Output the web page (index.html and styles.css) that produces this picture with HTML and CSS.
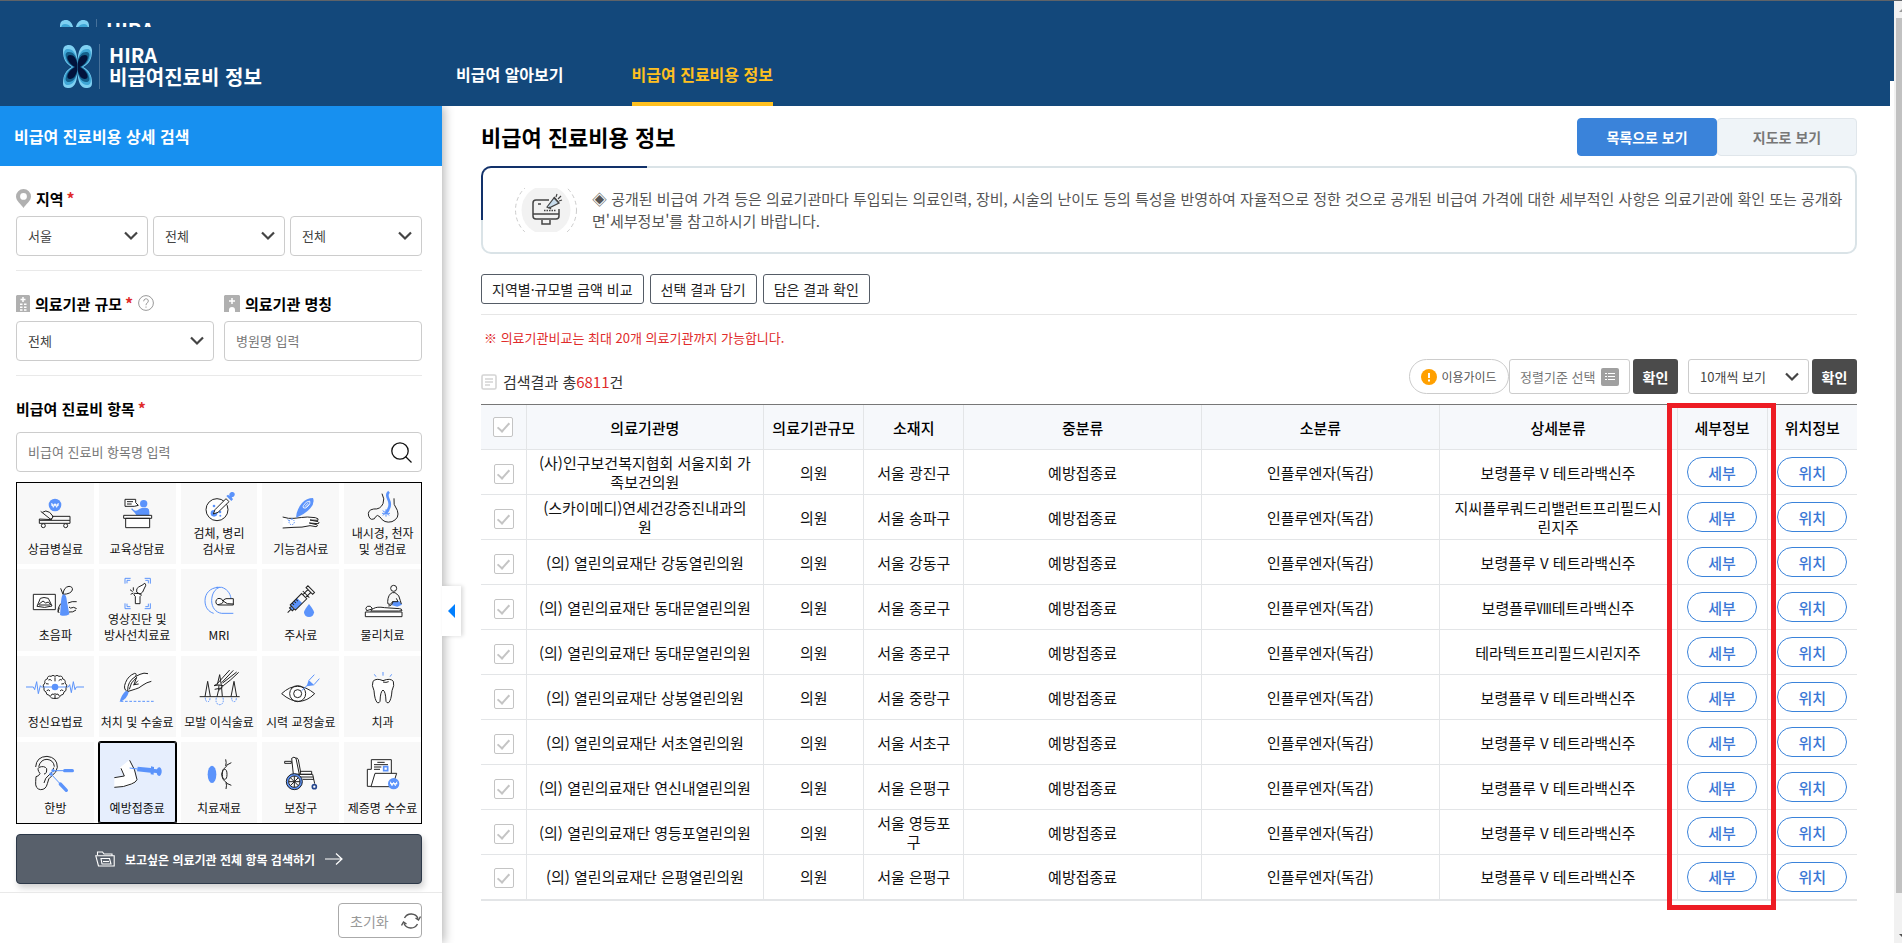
FILE: index.html
```html
<!DOCTYPE html>
<html lang="ko">
<head>
<meta charset="utf-8">
<title>HIRA 비급여진료비 정보</title>
<link rel="stylesheet" href="styles.css">
</head>
<body>
<svg class="defs" width="0" height="0" aria-hidden="true">
  <symbol id="hira" viewBox="0 0 29 44">
    <g id="wings">
      <path fill="#7fd0f2" d="M6 0C2 0 0 2 0 6c0 8 3 13 9 16C3 25 0 30 0 38c0 4 2 5 6 5 5 0 8-5 8.500-16V17C14 5 11 0 6 0z"/>
      <path fill="#3fa6d6" d="M5 4C2 4 1 6 1 9c0 6 4 10 9 13-5 3-9 7-9 12 0 4 1 6 4 6 5 0 8-5 9.500-13V17C13 8 10 4 5 4z"/>
      <path fill="#14608c" d="M6 7C3 7 2 9 3 12c1 5 4 8 8 10-4 2-7 5-8 10-1 3 0 5 3 5 4 0 7-4 8.500-10V17C13 10 10 7 6 7z"/>
      <path fill="#02133c" d="M7 10c-3 0-3 3-2 5 2 4 4 5 7 7-3 2-5 3-7 7-1 2-1 5 2 5 4 0 6-4 7.500-9v-6C13 13 11 10 7 10z"/>
    </g>
    <use href="#wings" transform="matrix(-1 0 0 1 29 0)"/>
  </symbol>
  <symbol id="chev" viewBox="0 0 14 10"><path d="M1 1.500l6 6 6-6" fill="none" stroke="#444" stroke-width="2.200"/></symbol>
</svg>

<div class="page">
<div class="app">
  <header class="top">
    <div class="brand">
      <div class="brand-peek" aria-hidden="true">
        <div class="logo"><svg class="mark"><use href="#hira"/></svg><span class="logo-text">HIRA</span></div>
      </div>
      <a class="logo" href="#"><svg class="mark"><use href="#hira"/></svg><span class="logo-text">HIRA<br>비급여진료비 정보</span></a>
    </div>
    <nav class="menu">
      <a href="#">비급여 알아보기</a>
      <a href="#" class="on">비급여 진료비용 정보</a>
    </nav>
  </header>

  <div class="body">
    <aside class="side">
      <h2 class="side-title">비급여 진료비용 상세 검색</h2>
      <button class="fold" aria-label="접기"><svg width="8" height="14" viewBox="0 0 8 14"><path d="M0 7l7-7v14z" fill="#007fff"/></svg></button>

      <section class="block">
        <label class="name" for="sido"><svg width="15" height="19" viewBox="0 0 15 19"><path fill="#b0b0b0" fill-rule="evenodd" d="M7.500 0a7.500 7.500 0 0 1 7.500 7.500C15 12 10 15 7.500 19 5 15 0 12 0 7.500A7.500 7.500 0 0 1 7.500 0zm0 4a3.400 3.400 0 1 0 0 6.800 3.400 3.400 0 0 0 0-6.800z"/></svg>지역<i>*</i></label>
        <div class="row three">
          <span class="pick"><select id="sido"><option>서울</option></select><svg><use href="#chev"/></svg></span>
          <span class="pick"><select aria-label="시군구"><option>전체</option></select><svg><use href="#chev"/></svg></span>
          <span class="pick"><select aria-label="읍면동"><option>전체</option></select><svg><use href="#chev"/></svg></span>
        </div>
      </section>

      <section class="block">
        <div class="row two">
          <div>
            <label class="name" for="size"><svg width="14" height="17" viewBox="0 0 14 17"><path fill="#b0b0b0" d="M1 0h12l1 1v16H0V1z"/><path stroke="#fff" stroke-width="1.500" d="M7 2v5M4.500 4.500h5M4 9.200h2.500M8 9.200h2.500M4 12.200h2.500M8 12.200h2.500M4 15h2.500M8 15h2.500"/></svg>의료기관 규모<i>*</i><svg width="16" height="16" viewBox="0 0 16 16" fill="none" stroke="#999"><circle cx="8" cy="8" r="7.400"/><path d="M5.700 6.300c0-3.400 4.800-3.200 4.600-.2C10.200 7.900 8 8 8 10.200M8 11.500v1.200"/></svg></label>
            <span class="pick"><select id="size"><option>전체</option></select><svg><use href="#chev"/></svg></span>
          </div>
          <div>
            <label class="name" for="hosp"><svg width="16" height="17" viewBox="0 0 16 17"><path fill="#b0b0b0" d="M1 0h14l1 1v16h-5v-2a3 3 0 0 0-6 0v2H0V1z"/><path stroke="#fff" stroke-width="1.500" d="M8 3v6M5 6h6"/></svg>의료기관 명칭</label>
            <input class="field" id="hosp" type="text" placeholder="병원명 입력">
          </div>
        </div>
      </section>

      <section class="items">
        <label class="name" for="item">비급여 진료비 항목<i>*</i></label>
        <div class="find">
          <input class="field" id="item" type="text" placeholder="비급여 진료비 항목명 입력">
          <button aria-label="검색"><svg width="21" height="21" viewBox="0 0 21 21" fill="none" stroke="#111" stroke-width="1.300"><circle cx="9" cy="9" r="8.200"/><path d="M14.500 14.500l6 6"/></svg></button>
        </div>

        <div class="grid">
          <button class="cell"><svg class="ico" viewBox="51 24 228 174"><circle class="f" cx="165" cy="90" r="19"/><path stroke="#fff" fill="none" d="M155 84l5 13 5-11 5 11 5-13M153 90h24"/><path class="k" d="M118 136h92v9h-92zM210 136v-12h-54M118 136v-4l38 2M122 109l30 24M127 112q10-8 22 0l10 12q0 8-8 8"/><circle class="k w" cx="130" cy="152" r="6"/><circle class="k w" cx="197" cy="152" r="6"/></svg><span>상급병실료</span></button>
          <button class="cell"><svg class="ico" viewBox="295 24 228 174"><path class="k w" d="M373 73h32v10l8 8-12 3h-28zM379 80h18M379 87h14"/><circle class="f" cx="429" cy="86" r="11"/><path class="f" d="M391 102q4-4 8 3 8 5 17-3 6-4 18-4 12 0 12 12v12h-38q-4-8-17-20z"/><path class="k w" d="M369 121h84v9h-84zM375 130h72v28h-72z"/></svg><span>교육상담료</span></button>
          <button class="cell"><svg class="ico two-line" viewBox="541 24 228 126"><circle class="k w" cx="649" cy="104" r="33"/><circle class="f" cx="640" cy="115" r="10"/><circle class="f" cx="640" cy="93" r="4"/><circle class="f" cx="658" cy="111" r="4"/><circle class="f" cx="659" cy="122" r="3"/><path class="k w" d="M638 117l5-13 33-33 9 9-33 32z"/><path class="f" d="M677 63l5-4 5 4c-4-8 5-14 11-11 8 4 4 15-5 15l4 6-5 5z"/></svg><span>검체, 병리<br>검사료</span></button>
          <button class="cell"><svg class="ico" viewBox="131 24 228 174"><path class="k w" d="M190 126q18 6 34 4 24-3 40-4l24 2q12 3 8 8l-24-1 24 5q7 4 0 6l-26-2 22 5q6 4-2 6l-18-3q-24 6-48 5l-34 2"/><circle class="b" cx="217" cy="141" r="8" stroke-dasharray="4 3"/><path class="b" d="M205 134l6 4M218 129v4"/><path class="f" d="M230 128q2-26 18-44 14-15 33-15 6 15-8 31-16 18-43 28z"/><path stroke="#fff" fill="none" stroke-width="2.500" d="M252 92q8-14 19-14 4 6-5 15-8 9-13 6-3-3-1-7zM256 95l11-11M260 98l10-10"/></svg><span>기능검사료</span></button>
          <button class="cell"><svg class="ico two-line" viewBox="375 24 228 126"><path class="k" d="M486 56q9 16 3 30-8 18-28 16-20 3-15 21 3 9 9 10 10 1 12-8 5-8 13 1 12 20 36 14 24-10 16-34-14-18-10-36"/><path d="M507 50q-9 8-2 22 8 16 1 29l-7 12" fill="none" stroke="#5b93fb" stroke-width="8"/><path class="b" d="M488 107l20 14M508 107l-20 14M498 103v22M486 115h24"/></svg><span>내시경, 천자<br>및 생검료</span></button>

          <button class="cell"><svg class="ico" viewBox="51 282 228 174"><path class="k w" d="M100 358h66v46h-66zM121 370q10-5 24 0l11 23q-22 8-45 1zM115 389l14-11 8 6 8-3 8 9M117 390h33"/><path class="k" d="M182 340l7 18q2-22 18-24 12 1 10 11-4 12-28 13"/><path class="f" d="M191 358q8 0 10 22l7 38q-14 8-28 2l3-40q2-22 8-22z"/><path class="k" d="M204 384q12-6 26-4M207 396q2 6 14 1l9 4M207 411q12 2 21-6M182 386q-14 22-4 28M178 398l-4 14"/></svg><span>초음파</span></button>
          <button class="cell"><svg class="ico two-line" viewBox="295 282 228 126"><path class="b" d="M373 326v-16h17M432 310h17v16M373 385v16h17M432 401h17v-16M379 325v-9h10M434 316h9v9M379 386v9h10M434 395h9v-9"/><path class="k w" d="M404 386v-22q-7-4-3-9l19 1q4 6-2 9v21zM408 351q-2-12 6-15l13-7q8-9 8 3l-5 10q-2 10-12 16zM398 337v10M388 344l8 6M390 358l8-4"/></svg><span>영상진단 및<br>방사선치료료</span></button>
          <button class="cell"><svg class="ico" viewBox="541 282 228 174"><path class="b" d="M652 337c-24 2-39 18-39 40 0 20 10 33 26 38M657 337c-14 4-24 20-24 40s12 36 30 38h35M647 337h16c14 4 26 16 28 34"/><path class="k w" d="M698 371h-22q-8 2-9 8-2-9-12-9-11 2-9 14 2 6 8 6h44zM652 389q14-1 17-10l11 7 18 1"/></svg><span>MRI</span></button>
          <button class="cell"><svg class="ico" viewBox="131 282 228 174"><g transform="translate(205 413) rotate(-45)"><path class="k" d="M0 0h16"/><path class="f" d="M14-6h8v12h-8zM24-11h27v22H24z"/><path class="k" d="M22-11h48v22H22zM14-6h8v12h-8zM70-6h22v12H70zM92-14h8v28h-8zM78-14v28M30-11v8M38-11v8M46-11v8"/></g><path class="f" d="M269 387q15 19 15 25a15 14 0 0 1-30 0q0-6 15-25z"/></svg><span>주사료</span></button>
          <button class="cell"><svg class="ico" viewBox="375 282 228 174"><path class="k w" d="M436 411h110v14H436zM440 407q-6-8 2-13 10-3 14 5 2 6-4 9h84l10-1q0-6-8-6l-44-3q-24-4-34 3z"/><path class="f" d="M518 379h20l8 10-14 6-16-4z"/><path class="k" d="M505 393q12 0 14-14l-8 9q-10 2-8-8 1-22 14-27h8q14 6 16 24l3 10M518 380h16l-5-10"/><circle class="k w" cx="521" cy="340" r="9"/></svg><span>물리치료</span></button>

          <button class="cell"><svg class="ico" viewBox="51 18 228 174"><path class="b" d="M78 111h22l4 8 6-24 5 36 6-24 3 4h81l4-7 5 24 6-33 5 24 4-8h23"/><path class="k w" d="M165 79q-6-6-12 0-11-3-11 8-10 2-7 12-9 6-3 14-3 10 6 13 0 9 10 10 5 11 17 9 12 2 17-9 10-1 10-10 9-3 6-13 6-8-3-14 3-10-7-12 0-11-11-8-6-6-12 0z"/><path class="k" d="M145 90q6-4 10 2M176 92q4-6 10-2M138 101l8 1M184 102l8-1M140 122q6-5 10 1M180 123q4-6 10-1M152 138q3-9 10-5M168 133q7-4 10 5M165 82v12M165 129v18"/><path class="b" d="M132 111h66"/><circle class="f" cx="165" cy="111" r="10"/></svg><span>정신요법료</span></button>
          <button class="cell"><svg class="ico" viewBox="295 18 228 174"><path class="k w" d="M452 94q-14 3-25 11-14 11-22 12l-25 8q-14-8-5-28 8-20 27-27 8 0 2 10l14-7q12-6 24-2"/><path class="k" d="M404 80q-24 14-23 43M386 118q2-20 22-36l-9 24M412 92l-12 12 14-2"/><path class="f" d="M376 122l8 4q-4 22-27 30 5-22 19-34z"/><path class="b" d="M360 154h102" stroke-dasharray="8 5"/></svg><span>처치 및 수술료</span></button>
          <button class="cell"><svg class="ico" viewBox="541 18 228 174"><path class="k" d="M597 140h120M613 140l8-46 8 46M649 140q6-20 6-36M665 140q-1-28-8-66l-7 30M691 140l9-46 8 46M687 60q-20 22-38 42l-9 5 14-2 14 2q22-16 46-40M698 61l-35 37M708 66l-42 33M642 118l20-4M668 108l-14 14"/><path class="b" stroke-dasharray="5 3" d="M614 143q0 12 7 12t7-12M647 143q-4 20 10 21 14-1 10-21M693 143q0 12 7 12t7-12"/></svg><span>모발 이식술료</span></button>
          <button class="cell"><svg class="ico" viewBox="131 18 228 174"><path class="k w" d="M187 131q46-44 99 0-46 46-99 0z"/><circle class="k" cx="235" cy="131" r="24"/><circle class="k" cx="235" cy="131" r="12"/><path class="b" d="M247 122l18-17M269 91l16-17M284 104l16-18"/><path class="f" d="M268 90l17 16-23 3z"/></svg><span>시력 교정술료</span></button>
          <button class="cell"><svg class="ico" viewBox="375 18 228 174"><path class="b" d="M463 73l5 7M489 66v11M515 73l-5 7"/><path class="k w" d="M489 96q9 3 17-1M489 92q-20-9-30 2-5 12 3 28 2 28 10 36 6 2 8-4 1-30 9-34 8 4 9 34 2 6 8 4 8-8 10-36 8-16 4-28-9-11-31-2z"/></svg><span>치과</span></button>

          <button class="cell"><svg class="ico" viewBox="51 279 228 174"><path class="k" d="M107 354q2-31 34-32 31 3 31 33-2 16-16 25-12 7-14 24-4 18-20 18-17-2-15-24l1-15q8-1 12-9-10-14-3-19 16-6 23 4 1 16-8 16M116 353q6-22 25-22 20 2 22 22M161 356q-1 15-14 22-12 8-15 24"/><circle class="f" cx="159" cy="365" r="5"/><circle class="f" cx="153" cy="375" r="5"/><path class="b" d="M160 365h30M153 375l28 30"/><path stroke="#5b93fb" stroke-width="10" stroke-linecap="round" d="M194 365h23M181 405l18 19"/></svg><span>한방</span></button>
          <button class="cell sel" aria-pressed="true"><svg class="ico" viewBox="295 279 228 174"><path fill="#fff" d="M341 386l29-5-13-25 28-22q20 30 22 64-20 18-66 17z"/><path class="k" d="M341 386l30-5-10-23M387 334q18 28 22 58-3 8-17 13-22 10-51 10"/><path class="b" d="M387 357l24 3"/><path class="f" d="M411 353l40 4v-5l9 2v6l9 1q2-7 8-6 7 4 6 15-2 11-8 11-6-1-7-9l-9-1v6l-9-1v-5l-41-4z"/></svg><span>예방접종료</span></button>
          <button class="cell"><svg class="ico" viewBox="541 279 228 174"><ellipse class="f" cx="634" cy="376" rx="13" ry="26"/><path class="k" d="M675 331q3 10 0 20M677 349l15-8M678 403l14 6M676 401q3 6 0 19M679 350q-16 12-16 25 1 18 16 27"/><ellipse class="k" cx="672" cy="376" rx="7" ry="15"/></svg><span>치료재료</span></button>
          <button class="cell"><svg class="ico" viewBox="131 279 228 174"><path class="k w" d="M217 328q7-7 13 0l10 48h-18zM229 327q6-1 8 5l7 38M196 337h20v6h-20zM243 367h34v9h-34zM234 376h46l6 28M238 384h44M250 391h34"/><circle cx="225" cy="398" r="21" fill="#f8f8f8" stroke="#5b93fb" stroke-width="7"/><circle class="k" cx="225" cy="398" r="24"/><circle class="k" cx="225" cy="398" r="17"/><path class="k" d="M225 381v34M208 398h34M213 386l24 24M237 386l-24 24"/><circle cx="285" cy="413" r="6" fill="#fff" stroke="#26478e" stroke-width="5"/></svg><span>보장구</span></button>
          <button class="cell"><svg class="ico" viewBox="375 279 228 174"><path class="k w" d="M453 412h-11v-51h12v-29h60v56"/><path class="k" d="M472 340h22M462 347h42M462 354h22M462 361h18"/><path class="k w" d="M453 413l12-40h65l-13 40z"/><path d="M491 353h12v12h-12z" fill="#fff" stroke="#5b93fb" stroke-width="5"/><circle class="f" cx="521" cy="404" r="17"/><path stroke="#fff" fill="none" d="M511 398l5 12 5-10 5 10 5-12M510 404h22"/></svg><span>제증명 수수료</span></button>
        </div>

        <button class="all"><svg width="20" height="16" viewBox="0 0 20 16" fill="none" stroke="#fff" stroke-width="1.100"><path d="M2.500 4V1h5l1.500 2h8v1.500M3.500 15L.8 4.800h18.400V15zM6 7.500h8.500l1.500 5.500H7z"/><path d="M8 10.500h6"/></svg><span>보고싶은 의료기관 전체 항목 검색하기</span><svg width="18" height="12" viewBox="0 0 18 12" fill="none" stroke="#fff" stroke-width="1.200"><path d="M0 6h17M11 .5L17 6l-6 5.500"/></svg></button>
      </section>

      <div class="foot">
        <button class="reset">초기화<svg width="20" height="18" viewBox="0 0 20 18" fill="none" stroke="#555" stroke-width="1.400"><path d="M3.500 6A7.500 7.500 0 0 1 17 6.500M16.500 12A7.500 7.500 0 0 1 3 11.500M19.500 4.500L17.500 8 14.500 6M.5 13.500L2.500 10 5.500 12"/></svg></button>
      </div>
    </aside>

    <main class="main">
      <div class="head">
        <h1>비급여 진료비용 정보</h1>
        <div class="tabs"><button class="on">목록으로 보기</button><button>지도로 보기</button></div>
      </div>

      <div class="notice">
        <svg width="64" height="44" viewBox="0 0 64 44" fill="none" stroke="#444" stroke-width="1.500"><circle cx="32" cy="22" r="30.500" stroke="#ccc" stroke-width="1" stroke-dasharray="4 3"/><circle cx="32" cy="22" r="24.500" fill="#f2f2f2" stroke="none"/><path d="M35 12H22q-3 0-3 3v13q0 3 3 3h20q3 0 3-3v-7M19 26h26M28 32v4h8v-4M24 16h3"/><path d="M30 22.500h12" stroke-dasharray="1.500 1"/><path d="M33 19l7-9 5 5-10 5z" fill="#c8dcec" stroke-width="1.200"/><path d="M35 19l2 2M40 9l5 6M42 9l1-3M44 11l3-3M45 13l3-1" stroke-width="1.200"/></svg>
        <p>◈ 공개된 비급여 가격 등은 의료기관마다 투입되는 의료인력, 장비, 시술의 난이도 등의 특성을 반영하여 자율적으로 정한 것으로 공개된 비급여 가격에 대한 세부적인 사항은 의료기관에 확인 또는 공개화면'세부정보'를 참고하시기 바랍니다.</p>
      </div>

      <div class="acts"><button>지역별·규모별 금액 비교</button><button>선택 결과 담기</button><button>담은 결과 확인</button></div>
      <p class="warn">※ 의료기관비교는 최대 20개 의료기관까지 가능합니다.</p>

      <div class="bar">
        <p class="count"><svg width="16" height="16" viewBox="0 0 16 16" fill="none" stroke="#d4d4d4" stroke-width="1.600"><rect x="1" y="1" width="14" height="14" rx="1.500"/><path d="M4 5h8M4 8h8M4 11h5"/></svg><span>검색결과 총<b>6811</b>건</span></p>
        <div class="tools">
          <button class="guide"><svg width="16" height="16" viewBox="0 0 16 16"><circle cx="8" cy="8" r="8" fill="#ffa000"/><path d="M8 4v5M8 10.500v2" stroke="#fff" stroke-width="2"/></svg>이용가이드</button>
          <button class="sort">정렬기준 선택<svg width="18" height="18" viewBox="0 0 18 18"><rect width="18" height="18" rx="2" fill="#a0a0a0"/><path d="M4 5.500h2M7 5.500h7M4 8.500h2M7 8.500h7M4 11.500h2M7 11.500h7" stroke="#fff"/></svg></button>
          <button class="ok">확인</button>
          <span class="pick per"><select aria-label="페이지당 개수"><option>10개씩 보기</option></select><svg><use href="#chev"/></svg></span>
          <button class="ok">확인</button>
        </div>
      </div>

      <div class="result">
        <table>
          <colgroup><col class="c-check"><col class="c-wide"><col class="c-mid"><col class="c-mid"><col class="c-wide"><col class="c-wide"><col class="c-wide"><col class="c-btn"><col class="c-btn"></colgroup>
          <thead><tr><th><input type="checkbox" aria-label="전체 선택"></th><th>의료기관명</th><th>의료기관규모</th><th>소재지</th><th>중분류</th><th>소분류</th><th>상세분류</th><th>세부정보</th><th>위치정보</th></tr></thead>
          <tbody>
            <tr><td><input type="checkbox" aria-label="선택"></td><td>(사)인구보건복지협회 서울지회 가족보건의원</td><td>의원</td><td>서울 광진구</td><td>예방접종료</td><td>인플루엔자(독감)</td><td>보령플루 V 테트라백신주</td><td><button>세부</button></td><td><button>위치</button></td></tr>
            <tr><td><input type="checkbox" aria-label="선택"></td><td>(스카이메디)연세건강증진내과의원</td><td>의원</td><td>서울 송파구</td><td>예방접종료</td><td>인플루엔자(독감)</td><td>지씨플루쿼드리밸런트프리필드시린지주</td><td><button>세부</button></td><td><button>위치</button></td></tr>
            <tr><td><input type="checkbox" aria-label="선택"></td><td>(의) 열린의료재단 강동열린의원</td><td>의원</td><td>서울 강동구</td><td>예방접종료</td><td>인플루엔자(독감)</td><td>보령플루 V 테트라백신주</td><td><button>세부</button></td><td><button>위치</button></td></tr>
            <tr><td><input type="checkbox" aria-label="선택"></td><td>(의) 열린의료재단 동대문열린의원</td><td>의원</td><td>서울 종로구</td><td>예방접종료</td><td>인플루엔자(독감)</td><td>보령플루Ⅷ테트라백신주</td><td><button>세부</button></td><td><button>위치</button></td></tr>
            <tr><td><input type="checkbox" aria-label="선택"></td><td>(의) 열린의료재단 동대문열린의원</td><td>의원</td><td>서울 종로구</td><td>예방접종료</td><td>인플루엔자(독감)</td><td>테라텍트프리필드시린지주</td><td><button>세부</button></td><td><button>위치</button></td></tr>
            <tr><td><input type="checkbox" aria-label="선택"></td><td>(의) 열린의료재단 상봉열린의원</td><td>의원</td><td>서울 중랑구</td><td>예방접종료</td><td>인플루엔자(독감)</td><td>보령플루 V 테트라백신주</td><td><button>세부</button></td><td><button>위치</button></td></tr>
            <tr><td><input type="checkbox" aria-label="선택"></td><td>(의) 열린의료재단 서초열린의원</td><td>의원</td><td>서울 서초구</td><td>예방접종료</td><td>인플루엔자(독감)</td><td>보령플루 V 테트라백신주</td><td><button>세부</button></td><td><button>위치</button></td></tr>
            <tr><td><input type="checkbox" aria-label="선택"></td><td>(의) 열린의료재단 연신내열린의원</td><td>의원</td><td>서울 은평구</td><td>예방접종료</td><td>인플루엔자(독감)</td><td>보령플루 V 테트라백신주</td><td><button>세부</button></td><td><button>위치</button></td></tr>
            <tr><td><input type="checkbox" aria-label="선택"></td><td>(의) 열린의료재단 영등포열린의원</td><td>의원</td><td>서울 영등포구</td><td>예방접종료</td><td>인플루엔자(독감)</td><td>보령플루 V 테트라백신주</td><td><button>세부</button></td><td><button>위치</button></td></tr>
            <tr><td><input type="checkbox" aria-label="선택"></td><td>(의) 열린의료재단 은평열린의원</td><td>의원</td><td>서울 은평구</td><td>예방접종료</td><td>인플루엔자(독감)</td><td>보령플루 V 테트라백신주</td><td><button>세부</button></td><td><button>위치</button></td></tr>
          </tbody>
        </table>
        <div class="marker"></div>
      </div>
    </main>
  </div>
</div>
<div class="scroll" aria-hidden="true">
  <svg width="8" height="17" viewBox="0 0 8 17"><path d="M5 11l4-4v4z" fill="#999"/></svg>
  <div class="thumb"></div>
  <svg width="8" height="17" viewBox="0 0 8 17"><path d="M5 8h4v4z" fill="#505050"/></svg>
</div>
</div>
</body>
</html>
```
FILE: styles.css
```css
* { box-sizing: border-box; margin: 0; padding: 0; }
body, button, input, select {
  font-family: "Noto Sans CJK KR", "Noto Sans", sans-serif;
}
body { background: #fff; color: #111; font-size: 15px; }
button { background: none; border: 0; cursor: pointer; }
a { color: inherit; text-decoration: none; }
i, b { font-style: normal; font-weight: 400; color: #e02b2b; }
.defs { position: absolute; }

.page { display: flex; min-height: 100vh; border-top: 1px solid #5f6368; }
.app { flex: 1; min-width: 0; display: flex; flex-direction: column; }

/* window scrollbar */
.scroll { width: 8px; background: #f1f1f1; display: flex; flex-direction: column; }
.scroll svg { flex: none; }
.thumb { flex: 1; margin: 0 0 33px 2px; background: #c1c1c1; }

/* header */
.top {
  height: 105px; display: flex; flex: none;
  background:
    linear-gradient(#13487b, #13487b) 0 0 / 100% 80px no-repeat,
    linear-gradient(#13487b, #13487b) 0 0 / calc(100% - 4px) 100% no-repeat;
  color: #fff;
}
.brand { width: 456px; padding: 18px 0 0 60px; }
.brand-peek { height: 8px; overflow: hidden; }
.brand > .logo { margin: 17px 0 0 3px; }
.logo { display: flex; align-items: center; height: 45px; }
.mark { width: 29px; height: 44px; }
.logo-text {
  margin-left: 7px; padding-left: 9px; height: 45px;
  border-left: 1px solid #47719a;
  font-size: 20px; line-height: 22px; font-weight: 700;
}
.menu { display: flex; gap: 68px; }
.menu a { font-size: 16px; font-weight: 700; line-height: 26px; padding-top: 60px; }
.menu .on { color: #ffc01f; border-bottom: 4px solid #ffc01f; }

.body { flex: 1; display: flex; align-items: stretch; }

/* sidebar */
.side { width: 442px; flex: none; position: relative; background: #fff; box-shadow: 2px 0 10px rgba(0, 0, 0, .3); clip-path: inset(0 -30px 0 0); padding-bottom: 5px; }
.side-title { height: 60px; line-height: 60px; padding-left: 14px; background: #1790f0; color: #fff; font-size: 16px; }
.fold {
  position: absolute; left: 100%; top: 480px; width: 19px; height: 50px;
  background: #fff; box-shadow: 2px 0 4px rgba(0, 0, 0, .15);
  display: flex; align-items: center; justify-content: center;
}
.block { margin: 0 20px 0 16px; padding: 20px 0 14px; border-bottom: 1px solid #e9e9e9; }
.name { display: flex; align-items: center; gap: 5px; height: 24px; margin-bottom: 6px; font-size: 15px; font-weight: 700; color: #000; }
.name i { font-size: 16px; font-weight: 700; margin-left: -2px; }
.row { display: grid; }
.three { grid-template-columns: repeat(3, 1fr); gap: 5px; }
.two { grid-template-columns: repeat(2, 1fr); gap: 10px; }
.pick { display: grid; align-items: center; }
.pick > * { grid-area: 1 / 1; }
.pick svg { width: 14px; height: 10px; justify-self: end; margin-right: 10px; pointer-events: none; }
select, .field {
  width: 100%; height: 40px; padding: 0 11px 1px; appearance: none;
  border: 1px solid #ccc; border-radius: 4px; background: #fff;
  font-size: 13px; color: #444;
}
.field::placeholder { color: #777; }

.items { margin: 20px 20px 8px 16px; }
.items .name { margin-bottom: 12px; }
.find { display: grid; align-items: center; }
.find > * { grid-area: 1 / 1; }
.find button { justify-self: end; width: 21px; height: 21px; margin-right: 10px; }
.find svg { display: block; }

.grid { margin-top: 10px; border: 1px solid #000; display: grid; grid-template-columns: repeat(5, 1fr); grid-template-rows: repeat(4, 1fr); gap: 5px; height: 342px; }
.cell { display: flex; flex-direction: column; align-items: center; background: #f8f8f8; font-size: 12px; line-height: 16px; color: #111; white-space: nowrap; }
.cell.sel { background: #e6eefd; box-shadow: 0 0 0 1px #000, inset 0 0 0 1px #000; border-radius: 2px; }
.ico { width: 76px; height: 58px; flex: none; fill: none; stroke-width: 3; }
.ico.two-line { height: 42px; }
.k { stroke: #222; }
.w { fill: #fff; }
.b { stroke: #5b93fb; }
.f { fill: #5b93fb; }

.all {
  width: 100%; height: 50px; margin-top: 10px;
  display: flex; align-items: center; justify-content: center; gap: 10px;
  background: #58606b; border: 1px solid #2c3848; border-radius: 4px;
  box-shadow: 2px 4px 6px rgba(0, 0, 0, .18);
  color: #fff; font-size: 12px; font-weight: 700;
}
.foot { border-top: 1px solid #e9e9e9; padding: 10px 20px 0 0; display: flex; justify-content: flex-end; }
.reset {
  height: 35px; width: 84px; padding-left: 11px;
  display: flex; align-items: center; justify-content: space-between;
  border: 1px solid #aaa; border-radius: 4px; font-size: 14px; color: #999;
}

/* content */
.main { flex: 1; min-width: 0; padding: 12px 37px 20px 39px; }
.head { display: flex; justify-content: space-between; align-items: center; height: 38px; }
h1 { font-size: 22px; line-height: 36px; padding-bottom: 2px; color: #000; }
.tabs { display: flex; height: 38px; }
.tabs button { width: 140px; font-size: 14px; font-weight: 700; color: #777; background: #eff4f8; border: 1px solid #e0e6eb; border-radius: 4px; }
.tabs .on { background: #3a83da; border-color: #3a83da; color: #fff; }

.notice {
  position: relative; margin-top: 10px; height: 88px; padding: 0 8px 0 31px;
  display: flex; align-items: center; gap: 14px;
  border: 2px solid #dae3e7; border-radius: 10px;
}
.notice::before {
  content: ""; position: absolute; left: -2px; top: -2px; width: 164px; height: 52px;
  border: solid #12316a; border-width: 2px 0 0 2px; border-top-left-radius: 10px;
}
.notice svg { flex: none; }
.notice p { line-height: 22px; color: #555; word-break: break-all; }

.acts { display: flex; gap: 6px; margin-top: 20px; padding-bottom: 10px; border-bottom: 1px solid #e6e6e6; }
.acts button { height: 30px; padding: 0 10px; border: 1px solid #555c66; border-radius: 3px; font-size: 14px; color: #222; }
.warn { margin: 13px 0 11px 3px; font-size: 13px; line-height: 20px; color: #e02b2b; }

.bar { display: flex; justify-content: space-between; align-items: flex-end; height: 35px; }
.count { display: flex; align-items: center; gap: 6px; line-height: 24px; color: #333; }
.tools { display: flex; height: 35px; }
.tools button { height: 35px; }
.guide { width: 100px; display: flex; align-items: center; justify-content: center; gap: 4px; border: 1px solid #ccc; border-radius: 18px; font-size: 12px; color: #555; }
.sort { width: 121px; padding: 0 10px; display: flex; align-items: center; justify-content: space-between; border: 1px solid #ccc; border-radius: 3px; font-size: 13px; color: #777; white-space: nowrap; }
.ok { width: 45px; margin-left: 3px; background: #4b4b4b; border-radius: 3px; color: #fff; font-size: 14px; font-weight: 700; }
.per { width: 121px; margin-left: 10px; }
.per select { height: 35px; border-radius: 3px; }

.result { position: relative; margin-top: 10px; }
table { width: 100%; table-layout: fixed; border-collapse: collapse; border-top: 1px solid #777; border-bottom: 2px solid #e3e5e7; }
.c-check { width: 45px; }
.c-mid { width: 100px; }
.c-btn { width: 90px; }
th, td { height: 45px; padding: 0 10px; text-align: center; vertical-align: middle; border: 1px solid #e3e5e7; border-width: 1px 0 0 1px; line-height: 19px; word-break: break-all; }
th { background: #f6f8fb; font-weight: 500; color: #000; border-top-color: #777; padding: 0; }
th:first-child, td:first-child { border-left: 0; padding: 0; }
td:first-child { padding: 3px 0 0 1px; }
td:nth-last-child(-n+2) { padding: 0; }
td button { width: 70px; height: 30px; border: 1px solid #3a83da; border-radius: 15px; background: #fff; color: #3a77d5; font-size: 15px; font-weight: 500; }
input[type="checkbox"] { appearance: none; width: 20px; height: 20px; display: block; margin: 0 auto; border: 1px solid #c4c4c4; border-radius: 2px; background: #fff; }
input[type="checkbox"]::before { content: ""; display: block; width: 5px; height: 10px; margin: 2px auto; border: solid #c4c4c4; border-width: 0 2px 2px 0; transform: rotate(42deg); }

/* highlighted column */
.marker { position: absolute; right: 81px; top: -1px; bottom: -9px; width: 109px; border: 5px solid #ed1c24; pointer-events: none; }
```
